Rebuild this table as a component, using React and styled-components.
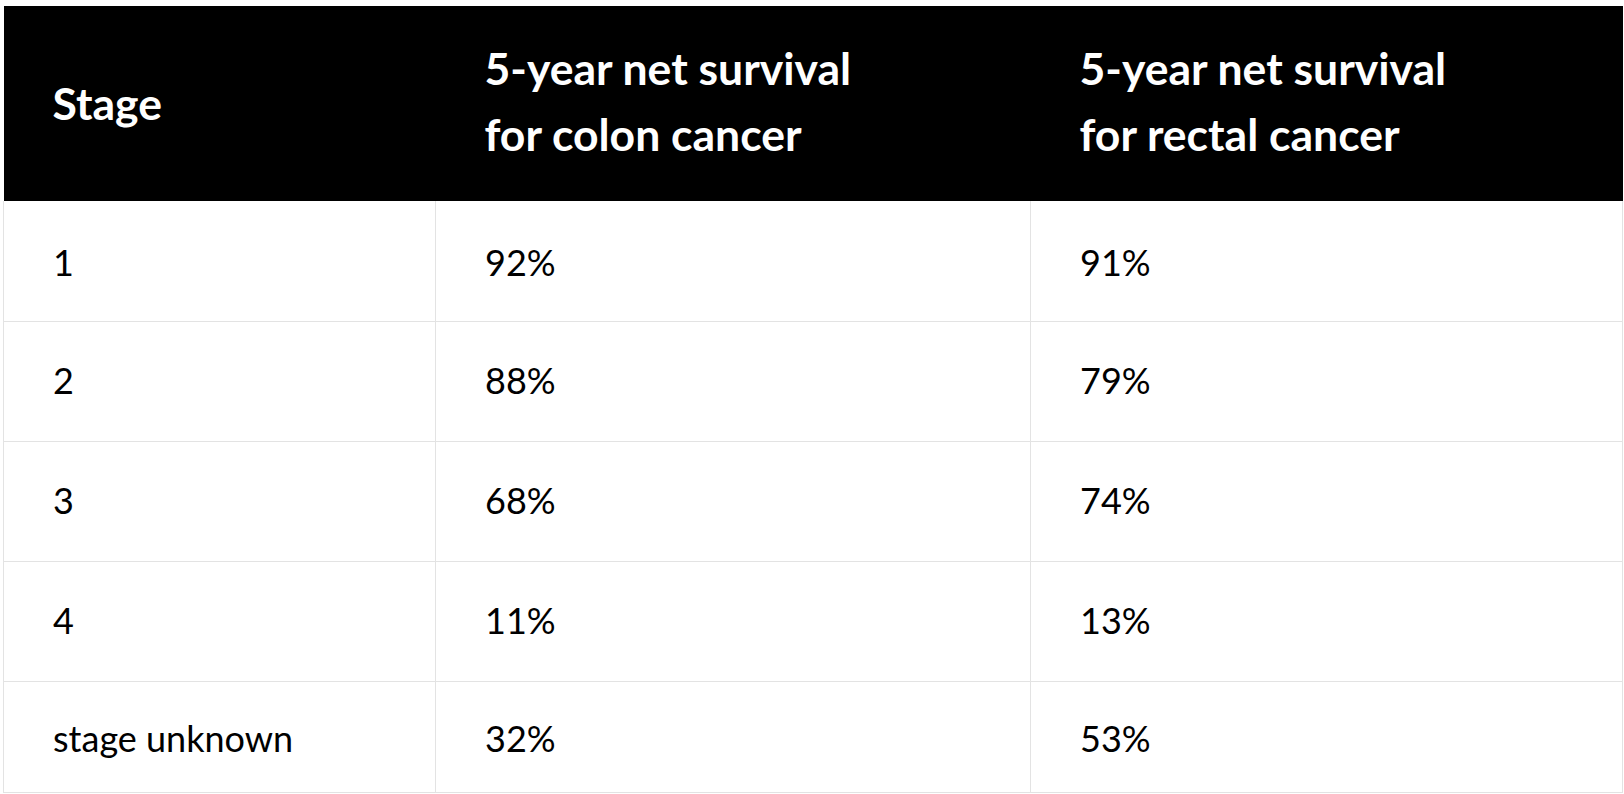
import React from "react";
import styled, { createGlobalStyle } from "styled-components";

const rows = [
  { stage: "1", colon: "92%", rectal: "91%" },
  { stage: "2", colon: "88%", rectal: "79%" },
  { stage: "3", colon: "68%", rectal: "74%" },
  { stage: "4", colon: "11%", rectal: "13%" },
  { stage: "stage unknown", colon: "32%", rectal: "53%" },
];

function App() {
  return (
    <>
      <GlobalStyle />
      <Page>
        <Table>
          <colgroup>
            <col style={{ width: 432 }} />
            <col style={{ width: 595 }} />
            <col />
          </colgroup>
          <thead>
            <HeadRow>
              <HeadCell $single>Stage</HeadCell>
              <HeadCell>
                5-year net survival
                <br />
                for colon cancer
              </HeadCell>
              <HeadCell>
                5-year net survival
                <br />
                for rectal cancer
              </HeadCell>
            </HeadRow>
          </thead>
          <tbody>
            {rows.map((row) => (
              <BodyRow key={row.stage}>
                <Cell>{row.stage}</Cell>
                <Cell>{row.colon}</Cell>
                <Cell>{row.rectal}</Cell>
              </BodyRow>
            ))}
          </tbody>
        </Table>
      </Page>
    </>
  );
}

export default App;

const GlobalStyle = createGlobalStyle`
  html, body {
    margin: 0;
    padding: 0;
    background: #ffffff;
  }
  body {
    font-family: Lato, "Open Sans", sans-serif;
    color: #000000;
  }
`;

const Page = styled.div`
  padding: 6px 1px 0 3px;
  overflow: hidden;
`;

const Table = styled.table`
  width: 100%;
  border-collapse: collapse;
  table-layout: fixed;
`;

const HeadRow = styled.tr`
  background: #000000;
  height: 195px;
`;

const HeadCell = styled.th`
  text-align: left;
  vertical-align: middle;
  color: #ffffff;
  font-weight: 700;
  font-size: 44.5px;
  line-height: 66px;
  padding: ${(props) => (props.$single ? "0 0 1px 49px" : "0 0 5px 49px")};
`;

const BodyRow = styled.tr`
  height: 120px;

  &:last-child {
    height: 111px;
  }
`;

const Cell = styled.td`
  font-size: 36px;
  line-height: 42px;
  font-weight: 400;
  vertical-align: middle;
  padding: 0 0 3px 49px;
  border: 1px solid #e3e3e3;
  border-top: none;

  tr:first-child > & {
    padding: 3px 0 0 49px;
  }

  tr:last-child > & {
    padding: 3px 0 0 49px;
  }
`;
